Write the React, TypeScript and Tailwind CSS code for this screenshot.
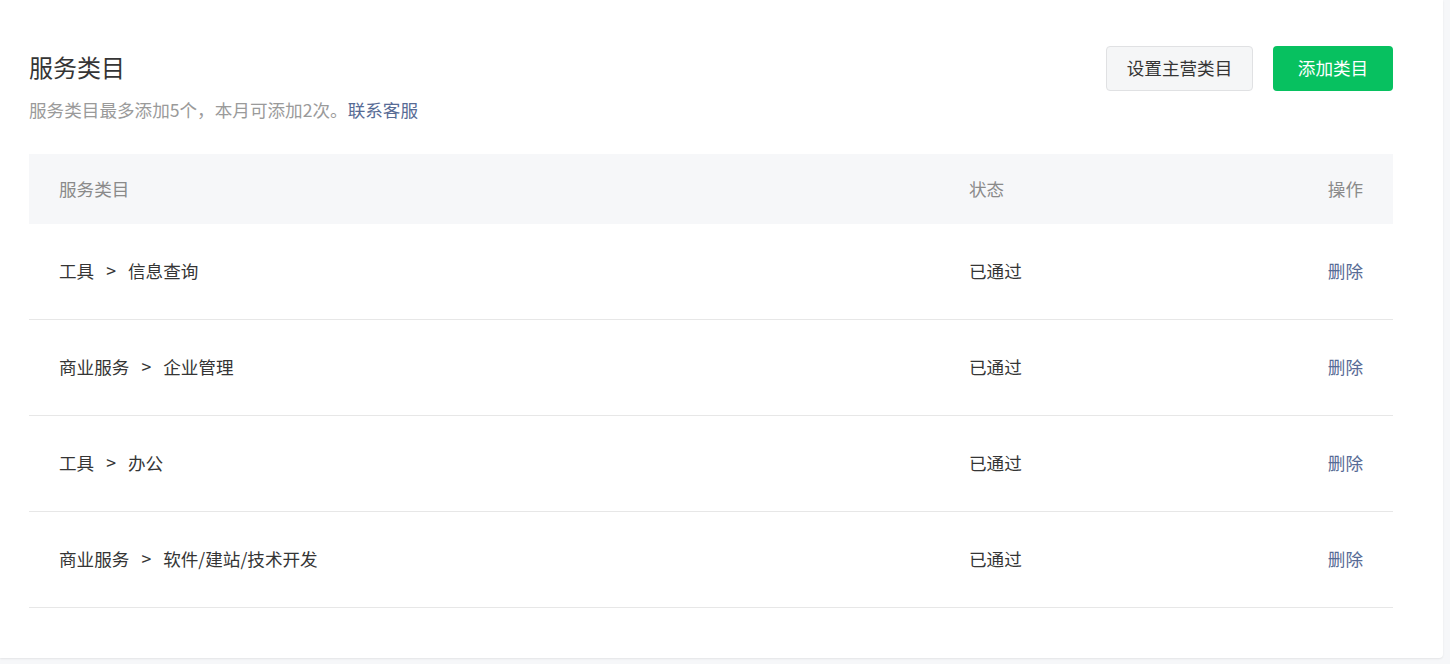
import React from 'react';

interface CategoryRow {
  id: string;
  path: string[];
  status: string;
}

const rows: CategoryRow[] = [
  { id: '1', path: ['工具', '信息查询'], status: '已通过' },
  { id: '2', path: ['商业服务', '企业管理'], status: '已通过' },
  { id: '3', path: ['工具', '办公'], status: '已通过' },
  { id: '4', path: ['商业服务', '软件/建站/技术开发'], status: '已通过' },
];

const App: React.FC = () => {
  return (
    <div
      className="min-h-[664px] w-full bg-[#f6f7f9] pr-[7px] pb-[7px]"
      style={{ fontFamily: '"Noto Sans CJK SC", "Noto Sans", "Liberation Sans", sans-serif' }}
    >
      <div className="bg-white rounded-br-[4px] shadow-[0_1px_2px_rgba(0,0,0,0.08)] pl-[29px] pr-[50px] pt-[46px] pb-[50px]">
        {/* header */}
        <div className="flex items-start justify-between">
          <div>
            <h2 className="text-[24px] leading-[42px] text-[#353535] font-normal">服务类目</h2>
            <p className="mt-[10px] text-[17.6px] leading-[24px] text-[#9a9a9a]">
              服务类目最多添加5个，本月可添加2次。
              <a href="#" className="text-[#576b95]">联系客服</a>
            </p>
          </div>
          <div className="flex items-center gap-[20px]">
            <button
              type="button"
              className="h-[45px] w-[147px] rounded-[4px] border border-[#e0e1e3] bg-[#f5f6f7] text-[17.6px] text-[#353535]"
            >
              设置主营类目
            </button>
            <button
              type="button"
              className="h-[45px] w-[120px] rounded-[4px] bg-[#07c160] text-[17.6px] text-white"
            >
              添加类目
            </button>
          </div>
        </div>

        {/* table */}
        <div className="mt-[32px]">
          <div className="grid grid-cols-[910px_1fr_auto] items-center h-[70px] px-[30px] bg-[#f6f7f9] text-[17.6px] text-[#8a8a8a]">
            <span>服务类目</span>
            <span>状态</span>
            <span className="text-right">操作</span>
          </div>
          {rows.map(row => (
            <div
              key={row.id}
              className="grid grid-cols-[910px_1fr_auto] items-center h-[96px] px-[30px] border-b border-[#e7e7e7] text-[17.6px] text-[#353535]"
            >
              <span>
                {row.path[0]}
                <span className="mx-[12px]">&gt;</span>
                {row.path[1]}
              </span>
              <span>{row.status}</span>
              <a href="#" className="text-right text-[#576b95]">删除</a>
            </div>
          ))}
        </div>
      </div>
    </div>
  );
};

export default App;
